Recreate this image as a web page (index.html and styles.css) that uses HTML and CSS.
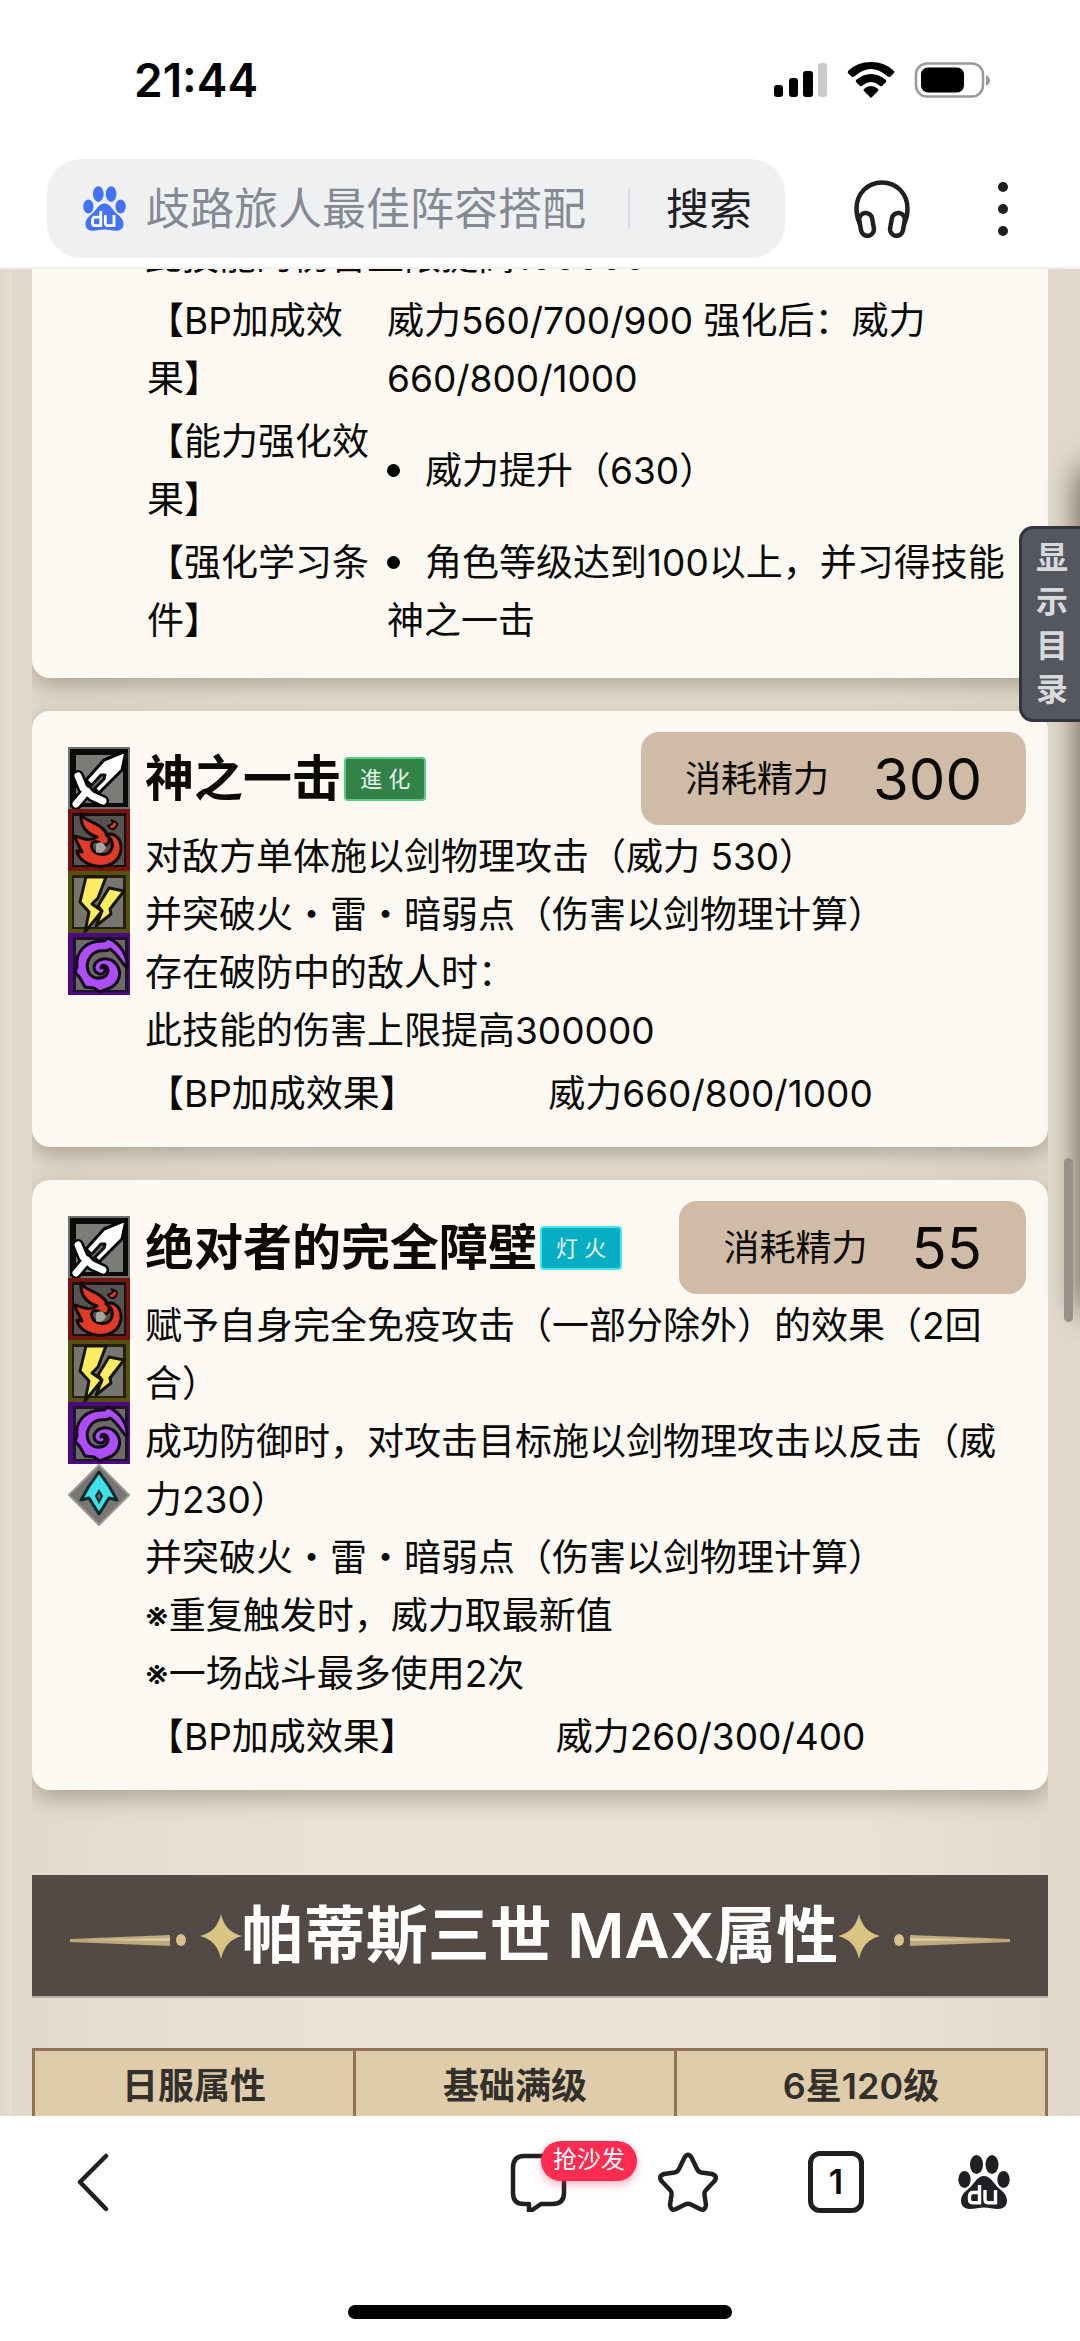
FILE: index.html
```
<!DOCTYPE html>
<html lang="zh-CN">
<head>
<meta charset="utf-8">
<meta name="viewport" content="width=device-width, initial-scale=1">
<title>歧路旅人最佳阵容搭配</title>
<link rel="stylesheet" href="styles.css">
</head>
<body>
<svg class="defs" aria-hidden="true">
  <symbol id="paw" viewBox="0 0 52 54">
    <ellipse cx="18.500" cy="9.500" rx="6.500" ry="9.500"/>
    <ellipse cx="34" cy="9.500" rx="6.500" ry="9.500"/>
    <ellipse cx="6.500" cy="24.500" rx="6.200" ry="8.500"/>
    <ellipse cx="45.500" cy="24.500" rx="6.200" ry="8.500"/>
    <path d="M26 21C32 21 35 27 39 31.500C44 36 49 39 49 46C49 51 45 54 40 54C35 54 31 52.500 26 52.500C21 52.500 17 54 12 54C7 54 3 51 3 46C3 39 8 36 13 31.500C17 27 20 21 26 21Z"/>
    <g fill="none" stroke="#fff" stroke-width="3.400">
      <path d="M21.500 30V49.500M21.500 37.500H15Q11.500 37.500 11.500 41V44.500Q11.500 47.800 15 47.800H21.500"/>
      <path d="M27 35V44.500Q27 47.800 30.500 47.800H38M37.500 35V49.500"/>
    </g>
  </symbol>
  <symbol id="sword" viewBox="0 0 62 62">
    <path fill="#6f6f6c" d="M0 0H62V62H0Z"/><path fill="#0b0b0b" d="M2 2H60V60H2Z"/><path fill="#7c7b78" d="M8 8H55V56H8Z"/>
    <path fill="#fff" stroke="#050505" stroke-width="3" stroke-linejoin="round" d="M58 4L54 23L31 46L18 33L36 13Z"/>
    <path fill="none" stroke="#050505" stroke-width="12" stroke-linecap="round" stroke-linejoin="round" d="M10 29L15 41L24 49L35 54M19 44L8 57"/>
    <path fill="none" stroke="#fff" stroke-width="7" stroke-linecap="round" stroke-linejoin="round" d="M10 29L15 41L24 49L35 54M19 44L8 57"/>
    <path fill="#777" stroke="#111" stroke-width="3" stroke-linejoin="round" d="M23 39L33 28L37 28L36 32L26 42"/>
  </symbol>
  <symbol id="fire" viewBox="0 0 62 62">
    <path fill="#74150f" d="M0 0H62V62H0Z"/><path fill="#181010" d="M4 4H58V58H4Z"/><path fill="#555451" d="M6 7H56V56H6Z"/>
    <path fill="#e23a28" stroke="#160a09" stroke-width="3" stroke-linejoin="round" d="M13 5C16 13 34 13 40 27C43 33 39 38 34 35C28 31 22 32 24 39C26 46 39 48 43 41C46 35 44 29 38 26C47 22 54 31 53 41C51 54 39 59 28 57C17 55 10 49 9 42L14 43L6 27C13 28 20 34 29 28C20 25 12 19 13 5Z"/>
    <path fill="#e23a28" stroke="#160a09" stroke-width="2" d="M43 11Q48 14 40 17Q45 24 49 16Q50 13 43 11Z"/>
    <path fill="#a8a4a0" d="M28 35Q35 30 38 39Q34 46 28 43Z"/>
  </symbol>
  <symbol id="thunder" viewBox="0 0 62 62">
    <path fill="#57500f" d="M0 0H62V62H0Z"/><path fill="#24220c" d="M4 4H58V58H4Z"/><path fill="#777570" d="M6 7H55V56H6Z"/>
    <path fill="#fcec63" stroke="#171507" stroke-width="3" stroke-linejoin="round" d="M18 6H38L30 27L24 33L34 40L17 61L21 41L12 31ZM41 17L56 20L42 38L43 43L28 55L34 40L30 35Z"/>
  </symbol>
  <symbol id="dark" viewBox="0 0 62 62">
    <path fill="#4b0a82" d="M0 0H62V62H0Z"/><path fill="#21132b" d="M5 4H60V59H5Z"/><path fill="#6b6a66" d="M8 7H57V57H8Z"/>
    <path fill="#ad4df6" stroke="#140a1b" stroke-width="3" stroke-linejoin="round" d="M36 8C18 7 7 19 9 34L7 39L12 45L17 54L26 55L32 59L44 54C54 47 54 35 45 28C37 23 27 27 26 34C26 41 36 44 37 37C37 34 33 34 33 35C33 30 40 32 40 38C39 46 26 48 21 40C16 31 22 20 31 18C36 17 39 19 42 16C49 20 53 29 59 35C60 22 52 10 40 5Z"/>
  </symbol>
  <symbol id="gem" viewBox="0 0 62 62">
    <path fill="#777673" stroke="#9b9995" stroke-width="2" d="M31 1L61 31L31 61L1 31Z"/>
    <path fill="#3fe0ea" stroke="#102b2f" stroke-width="3" stroke-linejoin="round" d="M31 8L41 22L49 36L41 34L31 50L21 34L13 36L21 22Z"/>
    <path fill="#58666a" stroke="#102b2f" stroke-width="2" d="M31 27L34 32L31 38L28 32Z"/>
  </symbol>
  <symbol id="ornament" viewBox="0 0 172 50">
    <path fill="#d9c08a" d="M0 28L100 24V35L0 31Z" opacity=".8"/>
    <path fill="#efe2bd" d="M20 29L100 27V30Z" opacity=".6"/>
    <ellipse fill="#d9c08a" cx="111" cy="29" rx="5" ry="6"/>
    <path fill="#d9c385" d="M151 3Q155 21 172 25Q155 29 151 48Q147 29 130 25Q147 21 151 3Z"/>
  </symbol>
</svg>

<div class="phone">
  <header class="top">
    <div class="status">
      <time class="clock">21:44</time>
      <svg class="signals" viewBox="0 0 216 36" aria-hidden="true">
        <rect x="0" y="23" width="9" height="12" rx="3"/><rect x="15" y="16" width="9" height="19" rx="3"/><rect x="29" y="9" width="10" height="26" rx="3"/><rect x="44" y="1" width="9" height="34" rx="3" fill="#ccc"/>
        <path d="M97 0Q111 0 120 9Q121 11 119 12L116 15Q114 15 113 14Q97 0 81 14Q80 15 78 15L75 12Q73 11 74 9Q83 0 97 0ZM97 12Q105 12 112 18Q113 20 111 21L108 24Q106 25 105 23Q97 17 89 23Q88 25 86 24L83 21Q81 20 82 18Q89 12 97 12ZM97 24Q101 24 104 27Q105 28 104 29L97 36L90 29Q89 28 90 27Q93 24 97 24Z"/>
        <rect x="142" y="1.500" width="67" height="33" rx="11" fill="none" stroke="#999" stroke-width="2.500"/><rect x="147" y="5.500" width="43" height="25" rx="7"/><path fill="#999" d="M212 13Q216 15 216 18.500Q216 22 212 24Z"/>
      </svg>
    </div>
    <div class="tools">
      <form class="search">
        <svg class="search-logo" aria-hidden="true"><use href="#paw"/></svg>
        <input class="search-input" type="text" aria-label="搜索内容" placeholder="歧路旅人最佳阵容搭配">
        <button class="search-button" type="button">搜索</button>
      </form>
      <button class="icon-button listen" type="button" aria-label="收听">
        <svg class="headphones" viewBox="0 0 56 58" aria-hidden="true"><g fill="none" stroke="#1f2023" stroke-width="4.500"><path d="M6 44Q2.500 37 2.500 29C2.500 13 14 2.500 28 2.500S53.500 13 53.500 29Q53.500 37 50 44"/><rect x="6" y="33" width="13" height="23" rx="6.500" transform="rotate(-10 12 44)"/><rect x="37" y="33" width="13" height="23" rx="6.500" transform="rotate(10 44 44)"/></g></svg>
      </button>
      <button class="icon-button" type="button" aria-label="更多">
        <svg class="more" viewBox="0 0 10 54" aria-hidden="true"><circle cx="5" cy="5" r="5"/><circle cx="5" cy="27" r="5"/><circle cx="5" cy="49" r="5"/></svg>
      </button>
    </div>
  </header>

  <main class="page">
    <div class="content">
      <article class="card card-first">
        <p class="text">此技能的伤害上限提高100000</p>
        <dl class="effects">
          <dt>【BP加成效果】</dt><dd>威力560/700/900 强化后：威力660/800/1000</dd>
          <dt>【能力强化效果】</dt><dd class="bullet">威力提升（630）</dd>
          <dt>【强化学习条件】</dt><dd class="bullet">角色等级达到100以上，并习得技能神之一击</dd>
        </dl>
      </article>

      <article class="card">
        <div class="attrs">
          <svg><use href="#sword"/></svg><svg><use href="#fire"/></svg><svg><use href="#thunder"/></svg><svg><use href="#dark"/></svg>
        </div>
        <div class="skill">
          <div class="skill-head">
            <h3 class="skill-name">神之一击</h3><span class="tag tag-green">進 化</span>
            <p class="cost">消耗精力<b class="cost-value">300</b></p>
          </div>
          <p class="text">对敌方单体施以剑物理攻击（威力 530）<br>并突破火・雷・暗弱点（伤害以剑物理计算）<br>存在破防中的敌人时：<br>此技能的伤害上限提高300000</p>
          <dl class="effects effects-single"><dt>【BP加成效果】</dt><dd>威力660/800/1000</dd></dl>
        </div>
      </article>

      <article class="card">
        <div class="attrs">
          <svg><use href="#sword"/></svg><svg><use href="#fire"/></svg><svg><use href="#thunder"/></svg><svg><use href="#dark"/></svg><svg><use href="#gem"/></svg>
        </div>
        <div class="skill">
          <div class="skill-head">
            <h3 class="skill-name">绝对者的完全障壁</h3><span class="tag tag-cyan">灯 火</span>
            <p class="cost">消耗精力<b class="cost-value">55</b></p>
          </div>
          <p class="text">赋予自身完全免疫攻击（一部分除外）的效果（2回合）<br>成功防御时，对攻击目标施以剑物理攻击以反击（威力230）<br>并突破火・雷・暗弱点（伤害以剑物理计算）<br>※重复触发时，威力取最新值<br>※一场战斗最多使用2次</p>
          <dl class="effects effects-single"><dt>【BP加成效果】</dt><dd>威力260/300/400</dd></dl>
        </div>
      </article>

      <h2 class="banner">
        <svg class="ornament" aria-hidden="true"><use href="#ornament"/></svg>帕蒂斯三世 MAX属性<svg class="ornament ornament-right" aria-hidden="true"><use href="#ornament"/></svg>
      </h2>

      <table class="stats">
        <thead><tr><th>日服属性</th><th>基础满级</th><th>6星120级</th></tr></thead>
      </table>
    </div>
    <div class="drawer-shadow"></div>
    <button class="toc" type="button">显示目录</button>
    <div class="scrollbar"></div>
  </main>

  <footer class="bottom">
    <nav class="nav">
      <button class="icon-button nav-back" type="button" aria-label="返回"><svg viewBox="0 0 60 60" aria-hidden="true"><path class="line" d="M40 4L14 30L40 57"/></svg></button>
      <button class="icon-button nav-comment" type="button" aria-label="评论"><svg viewBox="0 0 60 60" aria-hidden="true"><path class="line" d="M14 4H42Q54 4 54 16V41Q54 52 42 52H31L19 60V52H14Q3 52 3 41V16Q3 4 14 4Z"/></svg><span class="badge">抢沙发</span></button>
      <button class="icon-button" type="button" aria-label="收藏"><svg viewBox="0 0 60 60" aria-hidden="true"><path class="line" d="M26.500 5.500Q30 0 33.500 5.500L39 17Q40.500 20 43.500 20.500L54 22Q60 24 56.500 29L48 38Q46 40 46.500 43L48 53Q47 60 41 56.500L33 52.500Q30 51 27 52.500L19 56.500Q13 60 12 53L13.500 43Q14 40 12 38L3.500 29Q0 24 6 22L16.500 20.500Q19.500 20 21 17Z"/></svg></button>
      <button class="icon-button" type="button" aria-label="标签页"><span class="tabs">1</span></button>
      <button class="icon-button" type="button" aria-label="首页"><svg class="nav-paw" aria-hidden="true"><use href="#paw"/></svg></button>
    </nav>
    <div class="home"></div>
  </footer>
</div>
</body>
</html>
```
FILE: styles.css
```
* { box-sizing: border-box; }
body, p, h2, h3, dl, dd { margin: 0; }
body { background: #fff; color: #0b0a08; font-family: Inter, "Noto Sans CJK SC", sans-serif; font-size: 37px; line-height: 58px; }
button, input { margin: 0; padding: 0; border: 0; background: none; color: inherit; font: inherit; }
svg { display: block; }
.defs { position: absolute; width: 0; height: 0; }
.phone { display: flex; flex-direction: column; height: 100vh; overflow: hidden; }

/* status bar and search */
.top { flex: none; padding-bottom: 9px; border-bottom: 2px solid #f3f1ed; background: #fff; }
.status { display: flex; align-items: center; justify-content: space-between; height: 159px; padding: 0 90px 0 134px; }
.clock { font-size: 46px; font-weight: 600; color: #000; }
.signals { width: 216px; height: 36px; }
.tools { display: flex; align-items: center; padding-left: 47px; padding-right: 45px; }
.search { display: flex; align-items: center; flex: 1; min-width: 0; height: 99px; padding: 0 33px 0 36px; border-radius: 34px; background: #eff0f2; }
.search-logo { flex: none; width: 43px; height: 45px; fill: #4472f7; }
.search-input { flex: 1; min-width: 0; height: 64px; margin-left: 20px; font-size: 44px; outline: 0; }
.search-input::placeholder { color: #858994; opacity: 1; }
.search-button { flex: none; padding-left: 36px; border-left: 2px solid #dcdde1; color: #1f2023; font-size: 43px; line-height: 40px; }
.icon-button { display: flex; align-items: center; justify-content: center; flex: none; width: 64px; height: 64px; }
.listen { margin: 0 57px 0 65px; }
.headphones { width: 56px; height: 58px; }
.more { width: 10px; height: 54px; fill: #1f2023; }

/* article */
.page { position: relative; flex: 1; min-height: 0; overflow: hidden; background: linear-gradient(90deg, #e2d8ca 0, #e4dacd 9px, #ece3d6 10px, #e4dacb 12px, #e4dacc 32px, #e6dfd1 14%, #e9e2d5 30%, #e9e2d5 80%, #e3dbcd 96%, #e2d8ca 100%); }
.content { margin: 0 32px; overflow: hidden; display: flex; flex-direction: column; gap: 33px; }
.card { display: flex; padding: 22px 22px 24px 36px; border-radius: 18px; background: #fcf9f2; box-shadow: 0 8px 24px rgba(60, 50, 40, .35); }
.card-first { display: block; margin-top: -41px; padding: 0 22px 28px 113px; border-radius: 0 0 18px 18px; }
.attrs { flex: none; width: 62px; margin-top: 14px; }
.attrs svg { width: 62px; height: 62px; }
.skill { flex: 1; min-width: 0; margin-left: 15px; }
.skill-head { display: flex; align-items: center; height: 95px; padding-bottom: 4px; }
.skill-name { font-size: 49px; font-weight: 700; line-height: 60px; }
.tag { height: 44px; margin-left: 3px; padding: 0 14px; border: 2px solid; border-radius: 4px; font-size: 22px; line-height: 40px; color: #e6f5ea; }
.tag-green { border-color: #5cc985; background: #338249; }
.tag-cyan { border-color: #43e8f2; background: #06aec4; }
.cost { display: flex; align-items: center; gap: 44px; height: 93px; margin-left: auto; padding: 0 44px; border-radius: 18px; background: #d0bca6; font-size: 36px; }
.cost-value { font-size: 58px; font-weight: 400; }
.effects { display: grid; grid-template-columns: 240px 1fr; align-items: center; row-gap: 5px; padding: 6px 0 0 2px; }
.effects-single { grid-template-columns: 280px 1fr; padding-top: 5px; padding-right: 32px; }
.effects-single dd { text-align: center; }
.bullet::before { content: ""; display: inline-block; width: 13px; height: 13px; margin-right: 25px; border-radius: 50%; background: #000; vertical-align: 7px; }
.banner { display: flex; align-items: center; justify-content: center; height: 123px; margin-top: 52px; border-bottom: 2px solid #b3afa9; background: #534a45; color: #fff; font-size: 62px; font-weight: 600; line-height: 80px; }
.ornament { width: 172px; height: 50px; }
.ornament-right { transform: scaleX(-1); }
.stats { width: 100%; margin-top: 17px; border-collapse: collapse; table-layout: fixed; background: #dfccab; color: #33302c; }
.stats th { height: 72px; padding: 0; border: 3px solid #8f7257; font-size: 36px; font-weight: 600; }
.stats th:nth-child(-n+2) { width: 321px; }

/* floating controls */
.toc { position: absolute; top: 257px; right: 0; width: 61px; height: 196px; padding: 7px 13px 7px 14px; border: 3px solid #33353b; border-right: 0; border-radius: 14px 0 0 14px; background: #54575f; color: #d8d9dc; font-size: 32px; font-weight: 600; line-height: 44px; word-break: break-all; }
.drawer-shadow { position: absolute; top: 200px; right: -32px; width: 32px; height: 840px; box-shadow: 0 0 32px rgba(50, 40, 30, .8); }
.scrollbar { position: absolute; top: 889px; right: 7px; width: 9px; height: 164px; border-radius: 5px; background: #99928a; }

/* bottom bar */
.bottom { display: flex; flex-direction: column; align-items: center; justify-content: space-between; flex: none; height: 225px; padding-bottom: 22px; background: #fff; }
.nav { display: flex; align-items: center; gap: 84px; width: 100%; height: 131px; padding: 0 64px; }
.nav-back { margin-right: auto; }
.nav svg { width: 60px; height: 60px; }
.line { fill: none; stroke: #1f2023; stroke-width: 4.500; stroke-linejoin: round; stroke-linecap: round; }
.nav-comment { position: relative; }
.badge { position: absolute; left: 33px; top: -9px; height: 40px; padding: 0 12px; border-radius: 20px; background: #ff2b50; box-shadow: 0 4px 8px rgba(255, 43, 80, .35); color: #fff; font-size: 24px; line-height: 38px; white-space: nowrap; }
.tabs { width: 56px; height: 62px; border: 5px solid #1f2023; border-radius: 12px; font-size: 34px; font-weight: 600; line-height: 52px; }
.nav .nav-paw { width: 52px; height: 60px; fill: #1f2023; }
.home { width: 384px; height: 14px; border-radius: 7px; background: #000; }
```
